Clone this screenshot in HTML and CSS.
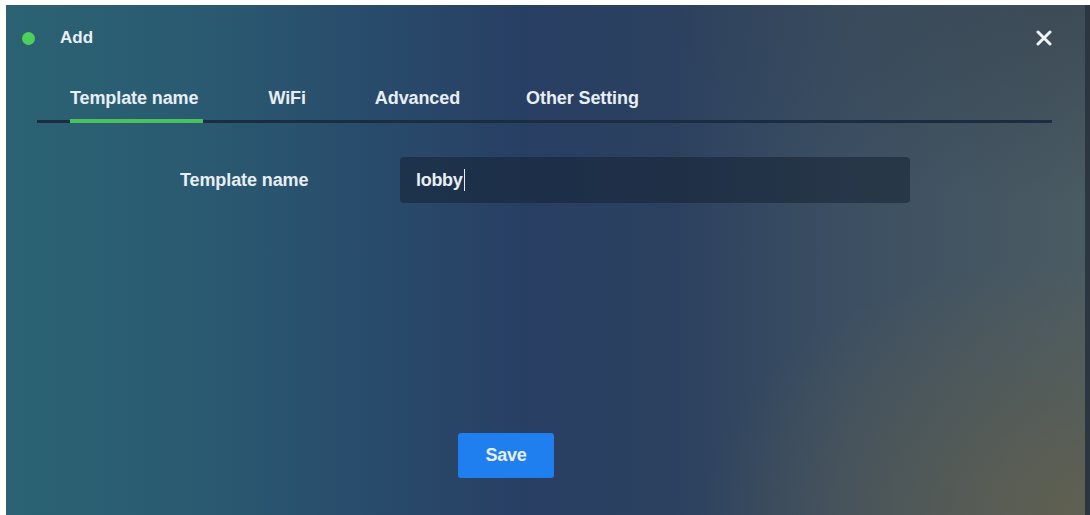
FILE: index.html
```html
<!DOCTYPE html>
<html>
<head>
<meta charset="utf-8">
<link rel="stylesheet" href="styles.css">
</head>
<body>
<div class="frame">
  <div class="dialog">
    <div class="header">
      <span class="dot"></span>
      <span class="title">Add</span>
      <span class="close">
        <svg width="16" height="16" viewBox="0 0 16 16"><path d="M2 2 L14 14 M14 2 L2 14" stroke="#eef3f7" stroke-width="3" stroke-linecap="round"/></svg>
      </span>
    </div>
    <div class="tabs">
      <div class="tab active">Template name</div>
      <div class="tab">WiFi</div>
      <div class="tab">Advanced</div>
      <div class="tab">Other Setting</div>
    </div>
    <div class="form">
      <div class="row">
        <label class="label">Template name</label>
        <div class="input"><span class="value">lobby</span><span class="caret"></span></div>
      </div>
    </div>
    <div class="footer">
      <button class="save">Save</button>
    </div>
  </div>
  <div class="scroll"></div>
</div>
</body>
</html>
```
FILE: styles.css
```css
html, body {
  margin: 0;
  padding: 0;
  background: #ffffff;
}
body {
  width: 1090px;
  height: 515px;
  overflow: hidden;
  font-family: "Liberation Sans", Arial, sans-serif;
}
.frame {
  display: flex;
  padding: 5px 0 0 6px;
  height: 510px;
}
.dialog {
  width: 1079px;
  height: 510px;
  display: flex;
  flex-direction: column;
  color: #e8eef4;
  background:
    radial-gradient(ellipse 380px 260px at 100% 100%, rgba(105, 98, 72, 0.7), rgba(105, 98, 72, 0) 100%),
    radial-gradient(ellipse 420px 200px at 100% 0%, rgba(40, 52, 66, 0.4), rgba(40, 52, 66, 0) 100%),
    linear-gradient(90deg, #2b6373 0%, #2a5a71 18%, #294d6c 32%, #283f64 48%, #2c415f 62%, #3c4f62 78%, #4b5b63 100%);
}
.scroll {
  width: 5px;
  height: 510px;
  background: #2c3640;
}
.header {
  height: 66px;
  display: flex;
  align-items: center;
  padding: 0 33px 0 16px;
}
.dot {
  width: 13px;
  height: 13px;
  border-radius: 50%;
  background: #4fcf5c;
  margin-right: 25px;
}
.title {
  font-size: 17px;
  font-weight: bold;
}
.close {
  margin-left: auto;
  display: flex;
}
.tabs {
  display: flex;
  gap: 66px;
  margin: 0 33px 0 31px;
  padding-left: 33px;
  padding-top: 4px;
  border-bottom: 3px solid #1b2d42;
}
.tab {
  font-size: 18px;
  font-weight: bold;
  letter-spacing: -0.1px;
  line-height: 24px;
  padding: 11px 0 9px;
  margin-bottom: -3px;
  border-bottom: 4px solid transparent;
}
.tab:first-child {
  padding-right: 5px;
  margin-right: -1px;
}
.tab:nth-child(3) {
  padding-left: 3px;
}
.tab.active {
  border-bottom-color: #47c25c;
}
.form {
  padding: 34px 0 0 174px;
}
.row {
  display: flex;
  align-items: center;
}
.label {
  width: 220px;
  font-size: 18px;
  font-weight: bold;
  letter-spacing: -0.1px;
}
.input {
  width: 510px;
  height: 46px;
  border-radius: 4px;
  background: rgba(18, 30, 46, 0.5);
  display: flex;
  align-items: center;
  padding-left: 16px;
  box-sizing: border-box;
}
.value {
  font-size: 18px;
  font-weight: bold;
  letter-spacing: -0.3px;
}
.caret {
  width: 1px;
  height: 22px;
  background: #e8eef4;
  margin-left: 1px;
}
.footer {
  margin-top: auto;
  padding: 0 0 37px 452px;
}
.save {
  width: 96px;
  height: 45px;
  border: none;
  border-radius: 3px;
  background: #1f7fee;
  color: #e6eef8;
  font-family: "Liberation Sans", Arial, sans-serif;
  font-size: 18px;
  font-weight: bold;
  letter-spacing: -0.2px;
  padding: 0;
}
```
